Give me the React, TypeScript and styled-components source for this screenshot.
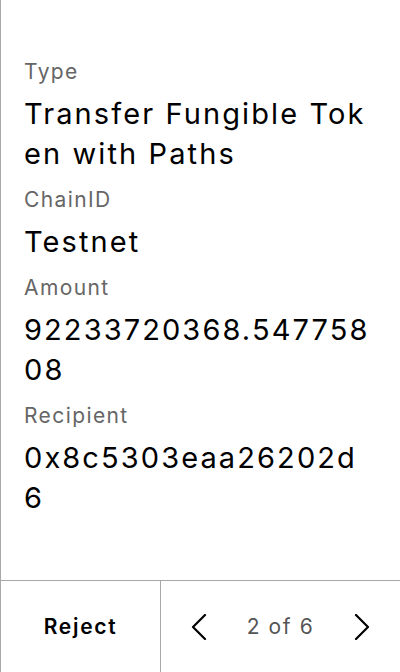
import React from "react";
import styled, { createGlobalStyle } from "styled-components";

const GlobalStyle = createGlobalStyle`
  html, body {
    margin: 0;
    padding: 0;
    background: #ffffff;
  }
  body {
    font-family: Inter, "Noto Sans", "Liberation Sans", sans-serif;
    -webkit-font-smoothing: antialiased;
  }
`;

const Screen = styled.div`
  width: 400px;
  height: 672px;
  display: flex;
  flex-direction: column;
  border-left: 1px solid #a8a8a8;
  box-sizing: border-box;
  background: #ffffff;
`;

const Details = styled.div`
  flex: 1;
  padding: 58px 24px 0 23px;
  display: flex;
  flex-direction: column;
  gap: 12px;
`;

const Field = styled.div`
  display: flex;
  flex-direction: column;
  gap: 8px;
`;

const Label = styled.div`
  font-size: 21px;
  line-height: 28px;
  letter-spacing: 1.4px;
  color: #666666;
`;

const Value = styled.div`
  font-size: 29px;
  line-height: 40px;
  letter-spacing: 2.1px;
  color: #000000;
  word-break: break-all;
`;

const Footer = styled.div`
  height: 92px;
  flex-shrink: 0;
  display: flex;
  border-top: 1px solid #a8a8a8;
  box-sizing: border-box;
`;

const RejectButton = styled.button`
  width: 160px;
  border: none;
  border-right: 1px solid #a8a8a8;
  background: transparent;
  font-family: inherit;
  font-size: 21px;
  font-weight: 600;
  letter-spacing: 1.7px;
  color: #000000;
  padding: 0;
`;

const Pager = styled.div`
  flex: 1;
  display: flex;
  align-items: center;
  justify-content: center;
  gap: 40px;
`;

const PageText = styled.span`
  font-size: 21px;
  letter-spacing: 1.6px;
  color: #555555;
`;

const ArrowButton = styled.button`
  border: none;
  background: transparent;
  padding: 0;
  width: 16px;
  height: 26px;
  display: flex;
  align-items: center;
  justify-content: center;
`;

function Chevron(props: { dir: "left" | "right" }) {
  const points = props.dir === "left" ? "14,1 2,13 14,25" : "2,1 14,13 2,25";
  return (
    <svg width="16" height="26" viewBox="0 0 16 26" fill="none">
      <polyline points={points} stroke="#000" strokeWidth="2.2" strokeLinecap="round" strokeLinejoin="round" />
    </svg>
  );
}

const fields = [
  { label: "Type", value: "Transfer Fungible Token with Paths" },
  { label: "ChainID", value: "Testnet" },
  { label: "Amount", value: "92233720368.54775808" },
  { label: "Recipient", value: "0x8c5303eaa26202d6" },
];

export default function App() {
  return (
    <>
      <GlobalStyle />
      <Screen>
        <Details>
          {fields.map((f) => (
            <Field key={f.label}>
              <Label>{f.label}</Label>
              <Value>{f.value}</Value>
            </Field>
          ))}
        </Details>
        <Footer>
          <RejectButton>Reject</RejectButton>
          <Pager>
            <ArrowButton><Chevron dir="left" /></ArrowButton>
            <PageText>2 of 6</PageText>
            <ArrowButton><Chevron dir="right" /></ArrowButton>
          </Pager>
        </Footer>
      </Screen>
    </>
  );
}
